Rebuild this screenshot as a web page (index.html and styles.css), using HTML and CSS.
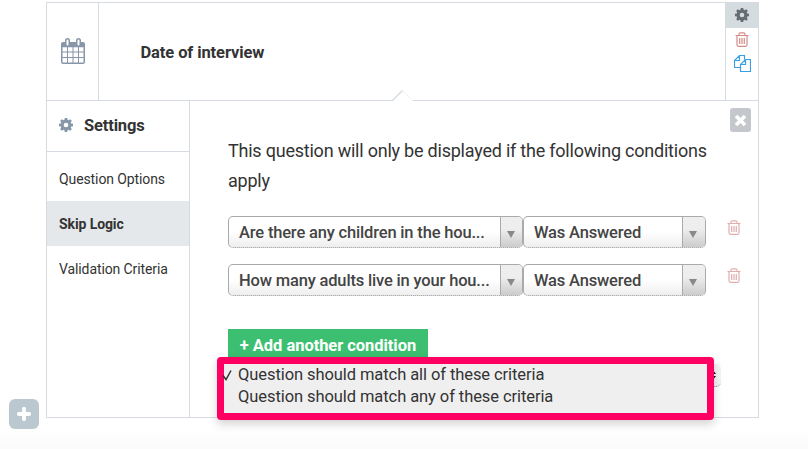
FILE: index.html
```html
<!DOCTYPE html>
<html lang="en">
<head>
<meta charset="utf-8">
<title>Skip Logic</title>
<link rel="stylesheet" href="styles.css">
</head>
<body>
<svg class="defs" aria-hidden="true">
  <symbol id="gear" viewBox="0 0 14 14"><path fill-rule="evenodd" d="M5.8 0h2.4l.4 1.8 1 .4L11.200 1.200l1.600 1.600-1 1.600.4 1 1.800.4v2.400l-1.800.4-.4 1 1 1.600-1.600 1.600-1.600-1-1 .4L8.200 14H5.800l-.4-1.800-1-.4-1.600 1-1.600-1.600 1-1.600-.4-1L0 8.200V5.800l1.800-.4.4-1-1-1.600 1.600-1.600 1.600 1 1-.4zM7 4.700a2.300 2.300 0 1 0 0 4.600 2.300 2.300 0 0 0 0-4.600z"/></symbol>
  <symbol id="trash" viewBox="0 0 14 15"><path fill="none" stroke="currentColor" stroke-width="1.200" d="M.5 3.500h13M4 3.500V2.300Q4 .8 5.200.8h3.600Q10 .8 10 2.300v1.200M2 3.500v9.300q0 1.500 1.500 1.500h7q1.500 0 1.500-1.500V3.500M4.700 6v6M7 6v6M9.300 6v6"/></symbol>
</svg>
<div class="row">
  <button class="add" aria-label="Add question"><svg width="14" height="14"><path d="M7 1.800v10.400M1.800 7h10.400"/></svg></button>
  <section class="card">
    <header class="head">
      <div class="type"><svg width="24" height="26" viewBox="0 0 24 26"><path fill="#8796a8" fill-rule="evenodd" d="M2 4h2V2.500a2 2 0 0 1 5 0V4h6V2.500a2 2 0 0 1 5 0V4h2q2 0 2 2v18q0 2-2 2H2q-2 0-2-2V6q0-2 2-2zM5.500 2.500v4a1 1 0 0 0 2 0v-4a1 1 0 0 0-2 0zM16.500 2.500v4a1 1 0 0 0 2 0v-4a1 1 0 0 0-2 0zM1.500 9.300v4.200H6V9.300zM7 9.300v4.200h4.500V9.300zM12.500 9.300v4.200H17V9.300zM18 9.300v4.200h4.500V9.300zM1.500 14.500V19H6v-4.500zM7 14.500V19h4.500v-4.500zM12.500 14.500V19H17v-4.500zM18 14.500V19h4.500v-4.500zM1.500 20v4.500H6V20zM7 20v4.500h4.500V20zM12.500 20v4.500H17V20zM18 20v4.500h4.500V20z"/></svg></div>
      <h1 class="title">Date of interview</h1>
      <div class="tools">
        <span class="tool active"><svg width="14" height="14"><use href="#gear"/></svg></span>
        <span class="tool delete"><svg width="14" height="15"><use href="#trash"/></svg></span>
        <span class="tool copy"><svg width="17" height="17" fill="none" stroke="#39a0e6" stroke-width="1.200"><path d="M6.500 12.500h-6v-7L5.500.5h5v4M.5 5.500h5v-5M6.500 9.500v7h10v-12h-5zM6.500 9.500h5v-5"/></svg></span>
      </div>
      <svg class="notch" width="22" height="12"><path fill="#fff" d="M1 12V11L11 1l10 10v1z"/><path fill="none" stroke="#d5dce0" stroke-width="1.400" d="M.5 11.500L10.500 1.500"/><path fill="none" stroke="#eff1f2" d="M10.500 1.500l10 10"/></svg>
    </header>
    <div class="body">
      <nav class="side">
        <h2 class="settings"><svg width="14" height="14"><use href="#gear"/></svg><span>Settings</span></h2>
        <a class="item">Question Options</a>
        <a class="item selected">Skip Logic</a>
        <a class="item">Validation Criteria</a>
      </nav>
      <div class="panel">
        <button class="close" aria-label="Close"><svg width="13" height="13"><path d="M2 2l9 9M11 2l-9 9"/></svg></button>
        <p class="intro">This question will only be displayed if the following conditions apply</p>
        <div class="condition">
          <div class="select wide"><span>Are there any children in the hou...</span><i></i></div>
          <div class="select"><span>Was Answered</span><i></i></div>
          <svg class="remove" width="14" height="15"><use href="#trash"/></svg>
        </div>
        <div class="condition">
          <div class="select wide"><span>How many adults live in your hou...</span><i></i></div>
          <div class="select"><span>Was Answered</span><i></i></div>
          <svg class="remove" width="14" height="15"><use href="#trash"/></svg>
        </div>
        <button class="more">+ Add another condition</button>
        <div class="native"><svg width="8" height="12"><path d="M0 5l4-5 4 5zM0 7h8l-4 5z"/></svg></div>
        <div class="menu">
          <div class="option"><svg width="11" height="12"><path d="M1 6.500l3 4L9 1.500"/></svg><span>Question should match all of these criteria</span></div>
          <div class="option"><span>Question should match any of these criteria</span></div>
        </div>
      </div>
    </div>
  </section>
</div>
</body>
</html>
```

FILE: styles.css
```css
* { box-sizing: border-box; }
body {
  margin: 0;
  height: 449px;
  overflow: hidden;
  font-family: Roboto, sans-serif;
  font-size: 16px;
  color: #333;
  background: linear-gradient(#fff 428px, #fafafa 449px);
}
button { border: 0; padding: 0; font: inherit; }
svg { display: block; flex: none; }
.defs { position: absolute; width: 0; height: 0; }
.row { display: flex; align-items: flex-end; padding: 2px 0 0 9px; }
.add {
  display: grid;
  place-items: center;
  width: 30px;
  height: 30px;
  margin: 0 7px -11px 0;
  padding-bottom: 1px;
  border-radius: 6px;
  background: #bbc8d0;
}
.add path { stroke: #fff; stroke-width: 3.800; stroke-linecap: round; }
.card { width: 713px; height: 416px; border: 1px solid #d5dbe0; background: #fff; }
.head {
  position: relative;
  display: flex;
  height: 98px;
  border-bottom: 1px solid #d5dbe0;
}
.type { width: 52px; padding: 35px 0 0 14px; border-right: 1px solid #d5dbe0; }
.title { flex: 1; margin: 0; padding-left: 41.500px; font-size: 16.5px; line-height: 99px; letter-spacing: -.1px; }
.tools { width: 33px; border-left: 1px solid #d5dbe0; }
.tool { display: flex; justify-content: center; align-items: center; height: 25px; }
.active { background: #d5dce0; fill: #646c74; padding-bottom: 1px; }
.delete { color: #d68b8b; height: 23px; }
.copy { height: 25px; }
.notch { position: absolute; left: 345px; bottom: -1px; }
.body { display: flex; height: 316px; }
.side { width: 143px; border-right: 1px solid #d5dbe0; }
.settings {
  display: flex;
  align-items: center;
  gap: 11px;
  height: 51px;
  margin: 0 0 4px;
  padding: 0 0 2px 12px;
  border-bottom: 1px solid #d5dbe0;
  font-size: 16.5px;
  letter-spacing: -.15px;
}
.settings svg { fill: #8796a8; }
.item { display: flex; align-items: center; height: 45px; padding-left: 12px; font-size: 14px; letter-spacing: -.1px; }
.item:first-of-type { padding-top: 1px; }
.selected { background: #e4e8ea; font-weight: 700; }
.panel { position: relative; width: 568px; padding: 35px 0 0 38px; }
.close {
  position: absolute;
  top: 7px;
  right: 7px;
  display: grid;
  place-items: center;
  width: 21px;
  height: 24px;
  border-radius: 3px;
  background: #c4c8cd;
}
.close path { stroke: #fff; stroke-width: 3.600; }
.intro { width: 490px; margin: 0 0 20px; font-size: 18px; line-height: 30px; letter-spacing: -.22px; }
.condition { display: flex; height: 32px; margin-bottom: 16px; }
.select {
  display: flex;
  width: 183px;
  overflow: hidden;
  border: 1px solid #aaa;
  border-bottom: 1px dotted #888;
  border-radius: 5px;
  background: linear-gradient(#fff 50%, #eee);
  font-size: 16.5px;
  font-weight: 500;
  letter-spacing: -.17px;
  color: #444;
  line-height: 31px;
  white-space: nowrap;
}
.wide { width: 295px; }
.select span { flex: 1; padding-left: 10px; }
.select i { display: grid; justify-content: start; align-items: center; width: 23px; padding: 4px 0 0 6px; border-left: 1px solid #aaa; background: linear-gradient(#eee 40%, #ccc); }
.wide i { width: 22px; }
.select i::before { content: ""; border: 4px solid transparent; border-top: 7px solid #888; border-bottom: 0; }
.remove { margin: 4px 0 0 21px; color: #e2adad; }
.more {
  display: block;
  width: 200px;
  height: 32px;
  margin-top: 33px;
  background: #3cbf70;
  color: #fff;
  font: 700 16.5px/33px Roboto, sans-serif;
  letter-spacing: -.05px;
  white-space: nowrap;
}
.native {
  position: absolute;
  top: 263px;
  left: 492px;
  width: 39px;
  height: 23px;
  padding: 5px 0 0 26px;
  border: 0 solid #999;
  border-bottom: 1px dotted #777;
  border-radius: 5px;
  background: #f4f4f4;
}
.menu {
  position: absolute;
  top: 256px;
  left: 26.500px;
  width: 497px;
  height: 63px;
  padding-top: 1px;
  border: 7px solid #ff0062;
  border-radius: 4px;
  background: #efefef;
  box-shadow: 0 4px 10px rgba(0, 0, 0, .18);
}
.option { position: relative; height: 22px; padding-left: 14.500px; font-size: 16.5px; line-height: 20px; letter-spacing: -.08px; white-space: nowrap; }
.option svg { position: absolute; left: -2px; top: 4px; fill: none; stroke: #333; stroke-width: 1.500; }
```
